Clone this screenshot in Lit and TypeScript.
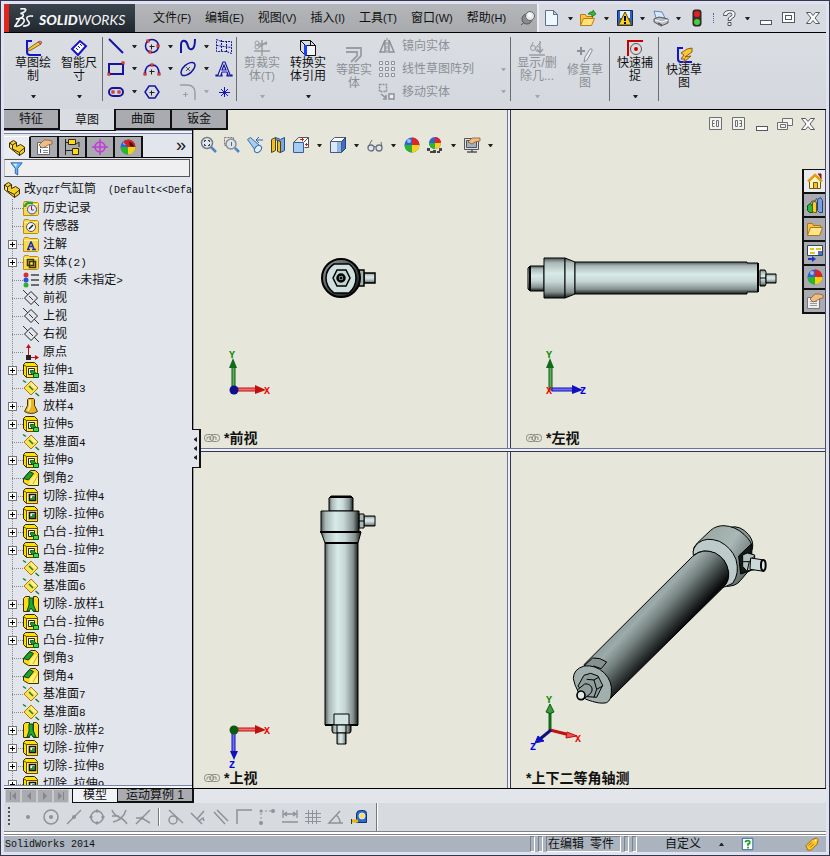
import { LitElement, html, svg, css, nothing } from "lit";
import type { TemplateResult, SVGTemplateResult } from "lit";
import { customElement } from "lit/decorators.js";
import { classMap } from "lit/directives/class-map.js";

/* ---------- icons: every glyph lives on a 16 x 16 grid ---------- */

const sketchL = svg`<path d="M2 1v11q0 3 3 3h11" fill="none" stroke="#1414c8" stroke-width="2"/><path d="M1 1h6" stroke="#1414c8" stroke-width="2"/>`;
const bluePlus = (x: number, y: number) => svg`<path d="M${x - 2} ${y}h5M${x} ${y - 2}v5" transform="translate(-.5 .5)" stroke="#222" stroke-width="1" fill="none"/>`;
const redDot = (x: number, y: number) => svg`<rect x="${x - 1}" y="${y - 1}" width="2" height="2" fill="#fff" stroke="#c00000" stroke-width="1"/>`;
const folder = (inner: SVGTemplateResult) => svg`<path d="M.5 3.500l1-2h4l1 1h8l1 1v11l-1 1H.5z" fill="#fbd94a" stroke="#b8900c"/><path d="M1 4.500h14" stroke="#fff3a8"/>${inner}`;
const box3d = svg`<path d="M.5 2.500l2-2h9l3 3v11l-1 1h-10l-3-3z" fill="#ffe000" stroke="#2c2400"/><path d="M3.500 4.500h11v11h-11z" fill="#ffe21c" stroke="#5c4a00"/><path d="M1 3l2.500 1.500" stroke="#5c4a00"/><path d="M4.500 14.500v-9h9" fill="none" stroke="#fff59a"/>`;
const ball = svg`<circle cx="8" cy="8" r="7.500" fill="#2d62d8"/><path d="M8 8V.5A7.500 7.500 0 0 1 15.500 8z" fill="#e02424"/><path d="M8 8h7.500A7.500 7.500 0 0 1 8 15.500z" fill="#f5d21a"/><path d="M8 8v7.500A7.500 7.500 0 0 1 .5 8z" fill="#2bb52b"/><circle cx="5" cy="4" r="2" fill="#fff" opacity=".55"/>`;
const hand = svg`<path d="M3 6l5-5h4l4 1v3l-4 1-3 2-3 1z" fill="#eebd86" stroke="#8b5a2b" stroke-width=".8"/>`;

const ICONS: Record<string, SVGTemplateResult> = {
  pin: svg`<path d="M1 15l5-4" stroke="#555"/><circle cx="7" cy="9" r="5" fill="#8a8c93" stroke="#555"/><circle cx="10" cy="6" r="4.500" fill="#e4e6ea" stroke="#666"/><circle cx="10" cy="5" r="2" fill="#fff"/>`,
  newdoc: svg`<path d="M1.500.5h8l4 4v11h-12z" fill="#eef6ff" stroke="#5c7390"/><path d="M9.500.5v4h4z" fill="#bcd0e4" stroke="#5c7390"/>`,
  open: svg`<path d="M.5 15.500v-11h5l1 2h6v3" fill="#f7c544" stroke="#c07a10"/><path d="M.5 15.500l3-7h11l-3 7z" fill="#ffe27a" stroke="#c07a10"/><path d="M8 4q2-3 5-2V0l3 4-4 3V5q-2-1-4-1z" fill="#35b635" stroke="#146c14" stroke-width=".7"/>`,
  warn: svg`<path d="M.5.5h15v15H.5z" fill="#2c62c8" stroke="#102a5c"/><path d="M3 1h10v7H3z" fill="#e9f1ff"/><path d="M8 2l6.500 13h-13z" fill="#ffd21c" stroke="#5c4300"/><path d="M8 6v5M8 12v2" stroke="#000" stroke-width="2"/>`,
  print: svg`<path d="M3 8L1 1l8 1 3 6z" fill="#d6e9ff" stroke="#6b86a8"/><path d="M1 9l5-2 9 2v4l-7 3-7-4z" fill="#b8bbc2" stroke="#55585f"/><path d="M2 10l7 2 6-2" stroke="#fff" fill="none"/><path d="M5 13l4 2" stroke="#333"/>`,
  traffic: svg`<rect x="4" y="0" width="8" height="16" rx="2" fill="#4a2a2a" stroke="#222"/><circle cx="8" cy="4" r="3" fill="#e02222"/><circle cx="8" cy="12" r="3" fill="#3fd23f"/>`,
  help: svg`<path d="M2.500 5.500q0-5 6-5t5.500 4q0 3-3 4-1 0-1 2h-3q0-3 2-4 2 0 2-2t-2.500-1.500-2.500 2.500zM7 12.500h3v3H7z" fill="#f7f8fa" stroke="#53555c" stroke-linejoin="round"/>`,
  min: svg`<rect x="2.500" y="10.500" width="11" height="4" fill="#fff" stroke="#55575e"/>`,
  max: svg`<rect x="1.500" y="2.500" width="12" height="10" fill="#fff" stroke="#55575e"/><rect x="4.500" y="5.500" width="6" height="4" fill="#fff" stroke="#55575e"/>`,
  close: svg`<path d="M1.500 2.500h4l2.500 3 2.500-3h4l-4.500 5.500 4.500 5.500h-4L8 10.500l-2.500 3h-4L6 8z" fill="#fff" stroke="#55575e"/>`,
  restore: svg`<path d="M5.500 2.500h10v7h-10z" fill="#f4f4ee" stroke="#6d6f74"/><path d="M.5 6.500h10v7H.5z" fill="#f4f4ee" stroke="#6d6f74"/><path d="M3.500 8.500h5v3h-5z" fill="none" stroke="#6d6f74"/>`,
  paneL: svg`<path d="M1.500 1.500h12v12h-12z" fill="#f4f4ee" stroke="#6d6f74"/><path d="M6.500 4.500h-2v6h2M8.500 4.500h2v6h-2zM4.500 7.500h2" fill="none" stroke="#6d6f74"/>`,
  paneR: svg`<path d="M1.500 1.500h12v12h-12z" fill="#f4f4ee" stroke="#6d6f74"/><path d="M8.500 4.500h2v6h-2M4.500 4.500h2v6h-2zM8.500 7.500h2" fill="none" stroke="#6d6f74"/>`,

  sketch: svg`${sketchL}<path d="M3 9l10-7 3 2-10 6-3 1z" fill="#ffc52e" stroke="#6b4a10" stroke-width=".8"/><path d="M13 2l3 2 1-2-2-1z" fill="#e88a8a" stroke="#803030" stroke-width=".6"/>`,
  dim: svg`<path d="M1 9l8-8 6 5-8 9z" fill="#fff" stroke="#1414c8" stroke-width="2"/><path d="M5 8l2 2M7 6l2 2M9 4l2 2" stroke="#1414c8"/>`,
  line: svg`<path d="M1 1l14 14" stroke="#1414a0" stroke-width="2"/>`,
  rect: svg`<rect x="1" y="3" width="14" height="10" fill="none" stroke="#1414a0" stroke-width="2"/>${redDot(15, 2)}${redDot(1, 13)}`,
  slot: svg`<rect x="1" y="4" width="14" height="8" rx="4" fill="none" stroke="#1414a0" stroke-width="2"/>${redDot(5, 8)}${redDot(11, 8)}`,
  circle: svg`<circle cx="8" cy="8" r="6.500" fill="none" stroke="#1414a0" stroke-width="1.500"/>${bluePlus(8, 8)}${redDot(4, 3)}${redDot(14, 8)}${redDot(6, 14)}`,
  arc: svg`<path d="M1 13q0-9 7-9t7 9" fill="none" stroke="#1414a0" stroke-width="1.500"/>${bluePlus(8, 10)}${redDot(1, 13)}${redDot(15, 13)}${redDot(8, 4)}`,
  hex: svg`<path d="M5 2h6l4 6-4 6H5L1 8z" fill="none" stroke="#1414a0" stroke-width="1.500"/>${bluePlus(8, 8)}`,
  spline: svg`<path d="M1 15V7q0-5 4-4 2 1 3 5t4 3q3-1 3-10" fill="none" stroke="#1414a0" stroke-width="2"/>`,
  ellipse: svg`<ellipse cx="8" cy="8" rx="8.500" ry="4.500" transform="rotate(-42 8 8)" fill="none" stroke="#1414a0" stroke-width="1.500"/><path d="M6 6l4 4M10 6l-4 4" stroke="#333" stroke-width=".8"/>`,
  fillet: svg`<path d="M0 1h7q8 0 8 8v7" fill="none" stroke="#9a9da3" stroke-width="1.500"/><path d="M3 10.500h5M5.500 8v5" stroke="#9a9da3"/>`,
  plane: svg`<path d="M.5 1.500l5 2h10v12l-5-2H.5zM.5 7.500l15 2M5.500 2v12M10.500 3v11" fill="none" stroke="#1414a0" stroke-dasharray="2 1"/>`,
  text: svg`<path d="M7 1h2l5 13h2v1h-5v-1h1l-1-3H6l-1 3h1v1H0v-1h2zM8 4l-2 5h4z" fill="#e9edf8" stroke="#1414a0" stroke-width="1.200"/>`,
  point: svg`<path d="M8.500 3v10M3 8.500h11M5 5l7 7M12 5l-7 7" stroke="#1414c8"/>`,
  trim: svg`<path d="M8 0v16M0 11h16M4 4h9M5 7l8-5" stroke="#9a9da3" stroke-width="1.500"/><circle cx="3" cy="3" r="2" fill="none" stroke="#9a9da3"/><circle cx="3" cy="7" r="2" fill="none" stroke="#9a9da3"/>`,
  convert: svg`<path d="M.5.5h10l5 5v10h-10l-5-5zM.5.5l5 5M10.500.5v5" fill="none" stroke="#111"/><path d="M5.500 5.500h10v10h-10z" fill="#f4f5f8" stroke="#111"/><path d="M5.500 5v10.500" stroke="#1440ff" stroke-width="3"/>`,
  offset: svg`<path d="M0 1h15v8l-6 6M0 5h11v4l-6 6" fill="none" stroke="#9a9da3" stroke-width="1.800"/>`,
  mirror: svg`<path d="M6 2L1 14h5zM10 2l5 12h-5z" fill="none" stroke="#8d9096" stroke-width="1.500"/><path d="M8 0v16" stroke="#8d9096" stroke-dasharray="3 1"/>`,
  pattern: svg`<path d="M1 1h3v3H1zM7 1h3v3H7zM13 1h3v3h-3zM1 7h3v3H1zM7 7h3v3H7zM13 7h3v3h-3zM1 13h3v3H1zM7 13h3v3H7zM13 13h3v3h-3z" transform="translate(-.5 -.5)" fill="#eee" stroke="#8d9096"/>`,
  move: svg`<rect x=".5" y=".5" width="7" height="7" fill="none" stroke="#8d9096" stroke-width="1.500" stroke-dasharray="2 1"/><rect x="10" y="10" width="5" height="5" fill="#eee" stroke="#8d9096" stroke-width="1.500"/><path d="M2 10l5 4M7 11v4H4" stroke="#8d9096" fill="none" stroke-width="1.500"/>`,
  relations: svg`<path d="M0 15h16M11 1v11M8 9l3 4 3-4" stroke="#9a9da3" stroke-width="1.300" fill="none"/><circle cx="4" cy="8" r="2.500" fill="none" stroke="#9a9da3"/><circle cx="9" cy="9" r="2.500" fill="none" stroke="#9a9da3"/><path d="M2 7l2-5M8 6l4-4" stroke="#9a9da3"/>`,
  repair: svg`<path d="M0 4h8M4 0v8" stroke="#8d9096" stroke-width="2"/><path d="M7 15l1-5 5-8q3-1 2 2l-5 9z" fill="#eceef1" stroke="#8d9096"/>`,
  snap: svg`<path d="M0 1h16M1 1v15" stroke="#c80000" stroke-width="2"/><circle cx="9" cy="9" r="5.500" fill="none" stroke="#555"/><circle cx="9" cy="9" r="2" fill="#d00000"/>`,
  rapid: svg`${sketchL}<path d="M5 6l6-4 5-1v4l-7 5 6-1-8 7 2-4H5l3-4z" fill="#ffc52e" stroke="#80500c" stroke-width=".9"/>`,

  part: svg`<path d="M.5 3l4-2.500 3 2v4l4-2 4 2.500v5l-5 3.500-10-8z" fill="#f7cf2a" stroke="#352a00"/><path d="M.5 3l3 2 4-2.500M3.500 5v4l7 3.500v3M10.500 12l5-4" fill="none" stroke="#352a00"/><path d="M1.500 4.500l1.500 1v3l-1.500-1z" fill="#fff29a"/>`,
  props: svg`<path d="M1.500 3.500h12v12h-12z" fill="#fff" stroke="#666"/><path d="M4 8h1M4 11h1M4 13h1" stroke="#2255cc" stroke-width="2"/><path d="M7 8.500h5M7 11.500h5M7 13.500h5" stroke="#888"/>${hand}`,
  config: svg`<path d="M1.500 0v16M2 3.500h4M2 11.500h6" stroke="#222" fill="none"/><path d="M4.500.5h7v5h-7z" fill="#ffd91c" stroke="#332b00"/><path d="M8.500 9.500h6v6h-6z" fill="#ffd91c" stroke="#332b00"/><path d="M12 5l3-2v5" stroke="#332b00" fill="none"/>`,
  dimx: svg`<circle cx="8" cy="8" r="5" fill="none" stroke="#c23bd8" stroke-width="1.500"/><path d="M8 0v16M0 8h16" stroke="#c23bd8" stroke-width="1.500"/>`,
  display: svg`${ball}<path d="M8 8L3 3q5-4 9-1 3 2 3 6z" fill="#d42020"/><path d="M9 3q4 0 5 5l-4-1z" fill="#401010"/>`,
  filter: svg`<path d="M1 1h14L9.500 8v8l-3-2V8z" fill="#68b8f0" stroke="#1853a8"/><path d="M4 2h5L7 6z" fill="#d8f0ff"/>`,
  history: folder(svg`<circle cx="9" cy="9.500" r="4.500" fill="#dfeaff" stroke="#2a4fb0"/><path d="M8.500 6v4h2.500" stroke="#c01818" fill="none"/><path d="M2 7q0-5 8-4" stroke="#2aa02a" stroke-width="2.500" fill="none"/>`),
  sensor: folder(svg`<circle cx="8" cy="9" r="4.500" fill="#f2f5ff" stroke="#555"/><path d="M6 11l4-4" stroke="#111" stroke-width="1.500"/>`),
  note: folder(svg`<path d="M8 5.500L5 13M8 5.500l3 7.500M6 10.500h4M4 13.500h3M9 13.500h4" stroke="#1530c0" stroke-width="1.500"/>`),
  solid: folder(svg`<path d="M4.500 5.500h6v6h-6zM6.500 7.500h6v6h-6z" fill="#ffe94a" stroke="#3a3000" stroke-width="1.500"/>`),
  material: svg`<circle cx="3" cy="3" r="2.500" fill="#d83030"/><circle cx="3" cy="8" r="2.500" fill="#2c50d8"/><circle cx="3" cy="13" r="2.500" fill="#2eb02e"/><path d="M8 3h8M8 8h8M8 13h8" stroke="#444" stroke-width="1.500"/>`,
  refplane: svg`<path d="M8 1.500l6.500 6.500L8 14.500 1.500 8z" fill="none" stroke="#222"/><path d="M0 0l5 5M6 6l4 4M11 11l5 5" stroke="#333"/>`,
  origin: svg`<path d="M5.500 13V2M5 13.500h9" stroke="#c01010" fill="none"/><path d="M5.500 0L3 4h5zM16 13.500l-4-2.500v5z" fill="#c01010"/><rect x="3" y="11" width="5" height="5" fill="#222"/>`,
  extrude: svg`${box3d}<path d="M5.500 6.500h6v6h-6z" fill="#fffbd0" stroke="#2c2400"/><path d="M7.500 8.500h3l2 2v3h-2l-3-3z" fill="#1f9a2c" stroke="#063"/><path d="M10.500 11.500h5v4h-5z" fill="#43d653" stroke="#0a5516"/>`,
  plane3: svg`<path d="M8 1l7 7-7 7-7-7z" fill="#ffe253" stroke="#a67c00"/><path d="M8 2l6 6-3 0-3-3z" fill="#fff3a8"/><path d="M0 .5l3 2M6 6l4 4M12.500 13l3.500 3" stroke="#128020" stroke-width="1.500"/>`,
  loft: svg`<path d="M4.500 1.500l1-1h5l1 1v6l3 6q-6 4-13 0l3-6z" fill="#e8b422" stroke="#4a3600"/><path d="M6 2h2v6l-2 5H4l2-5z" fill="#fff0a0"/>`,
  chamfer: svg`<path d="M.5 8.500l7-8h5l3 3v12h-10l-5-3z" fill="#ffd91c" stroke="#3a3000"/><path d="M.5 8.500l6-7 4 2-5 6.500z" fill="#1fa12e" stroke="#053d0c"/><path d="M6.500 10.500L12 5h3v10H6.500z" fill="#fff07a"/><path d="M10 14l5-9" stroke="#e0a800"/>`,
  cut: svg`${box3d}<path d="M6.500 6.500h6v6h-6z" fill="#f4fff0" stroke="#111" stroke-width="1.500"/><path d="M7.500 11.500h4v-3h-2v2h-2z" fill="#17a028" stroke="#0a5516" stroke-width=".6"/>`,
  cutloft: svg`<path d="M.5 2.500l2-2h4v15h-6zM10.500.5h3l2 2v13h-5z" fill="#ffd91c" stroke="#3a3000"/><path d="M6 2h4v6l3 7h-3l-2-3-2 3H4l2-6z" fill="#1fa736" stroke="#064d10"/>`,

  zoomfit: svg`<circle cx="6" cy="6" r="5.500" fill="#e2e9ee" stroke="#777b85" stroke-width="1.500"/><path d="M3.500 5V3.500H5M7 3.500h1.500V5M8.500 7v1.500H7M5 8.500H3.500V7" fill="none" stroke="#333"/><path d="M10 10l5 5" stroke="#4f86c6" stroke-width="2.500"/>`,
  zoomarea: svg`<rect x=".5" y=".5" width="9" height="8" fill="none" stroke="#777" stroke-dasharray="2 1"/><circle cx="7" cy="7" r="5" fill="#d9e3ec" stroke="#888b92" stroke-width="1.500"/><path d="M7.500 5v4" stroke="#666"/><path d="M11 11l4 4" stroke="#4f86c6" stroke-width="2.500"/>`,
  prev: svg`<path d="M.5 2.500l3-2 9 8-4 5z" fill="#a9cdf0" stroke="#3a6ca8"/><ellipse cx="11" cy="12" rx="4" ry="3" transform="rotate(-45 11 12)" fill="#e2effb" stroke="#3a6ca8"/><path d="M16 3h-6M12 0L9 3l3 3" stroke="#2c66b8" fill="none"/>`,
  section: svg`<path d="M1.500 2.500l4-2v13l-4 2z" fill="#f0c020" stroke="#50400a"/><path d="M5.500.5l5 2 4-2v13l-4 2v-11l-5-2z" fill="#78a8e8" stroke="#24508c"/><path d="M7.500 3.500l3 1v11l-3-1z" fill="#f0c020" stroke="#50400a"/>`,
  orient: svg`<path d="M5.500.5h10v10h-4M.5 5.500l5-5M10.500 5.500l5-5" fill="#fff" stroke="#555"/><path d="M7 2.500h4M9.500.5v4M12 7.500h3M13.500 6v3" stroke="#d02020"/><path d="M.5 5.500h10v10H.5z" fill="#a8cbf2" stroke="#335f9c"/>`,
  cube: svg`<path d="M.5 4.500l4-4h11v11l-4 4H.5z" fill="#fff" stroke="#4a5a78"/><path d="M11.500 4.500l4-4v11l-4 4z" fill="#3e6fc0" stroke="#24437c"/><path d="M.5 4.500h11v11H.5z" fill="#d9e7f8" stroke="#4a5a78"/><path d="M7 5h4v10H7z" fill="#8fb6ea"/>`,
  glasses: svg`<circle cx="4" cy="11" r="3" fill="#dbe8f2" stroke="#6b727c" stroke-width="1.300"/><circle cx="12" cy="11" r="3" fill="#dbe8f2" stroke="#6b727c" stroke-width="1.300"/><path d="M7 10q1-1 2 0M1 10l4-7M15 10l-1-5" fill="none" stroke="#6b727c"/>`,
  ball,
  scene: svg`<path d="M0 11h3v3H0zM6 13h3v3H6zM12 11h3v3h-3zM3 14h3v2H3zM10 14h3v2h-3z" fill="#444"/><circle cx="8" cy="6" r="6" fill="#2d62d8"/><path d="M8 6V0a6 6 0 0 1 6 6z" fill="#e02424"/><path d="M8 6h6a6 6 0 0 1-6 6z" fill="#f5d21a"/><path d="M8 6v6a6 6 0 0 1-6-6z" fill="#2bb52b"/>`,
  monitor: svg`<path d="M.5 1.500h14v11H.5z" fill="#dcdee2" stroke="#555"/><path d="M2.500 3.500h10v7h-10z" fill="#9fb0c4" stroke="#555"/><path d="M3 15h10M8 12v3" stroke="#555" stroke-width="1.500"/><path d="M4 5l4-4h8v3l-5 1-3 2z" fill="#eebd86" stroke="#8b5a2b" stroke-width=".8"/>`,
  home: svg`<path d="M11 1h3v5" fill="#c02020" stroke="#701010"/><path d="M2.500 8v7.500h11V8L8 2.500z" fill="#fff6c8" stroke="#7a5600"/><path d="M1 8.500L8 2l7 6.500" fill="none" stroke="#e0a010" stroke-width="2.500"/><path d="M6.500 9.500h4v6h-4z" fill="#f5c322" stroke="#7a5600"/>`,
  library: svg`<path d="M.5 8.500l3-2 2 3v6h-3l-2-2z" fill="#2db53c" stroke="#0a5516"/><path d="M5.500 5.500l2-1 2 1v10h-2l-2-1z" fill="#f7cf2a" stroke="#6b5200"/><path d="M10.500 2.500l3-2 2 3v12h-3l-2-2z" fill="#7a9fe4" stroke="#24437c"/><path d="M3 7l2-3h3l2-3" fill="none" stroke="#555"/>`,
  folder: svg`<path d="M.5 14.500v-12h5l1 2h7v4" fill="#f7c544" stroke="#b07410"/><path d="M.5 14.500l3-8h12l-3 8z" fill="#ffe68a" stroke="#b07410"/>`,
  palette: svg`<path d="M.5.5h15v10H.5z" fill="#fff" stroke="#345"/><path d="M3 4h4M9 4h5M3 8h5" stroke="#e8c410" stroke-width="2"/><path d="M11 6h4v4h-4z" fill="#4a72c0"/><path d="M1 13h4v-2l4 3-4 3v-2H1z" fill="#1838c8"/>`,
  cprops: svg`<path d="M.5 4.500h12v11H.5z" fill="#eee" stroke="#777"/><path d="M3 8.500h7M3 10.500h7M3 12.500h7" stroke="#999"/>${hand}`,

  kdot: svg`<circle cx="8" cy="8" r="2" fill="#8f9298"/>`,
  kcirc: svg`<circle cx="8" cy="8" r="7" fill="none" stroke="#8f9298" stroke-width="1.500"/><circle cx="8" cy="8" r="2" fill="#8f9298"/>`,
  kline: svg`<path d="M1 15L15 1" stroke="#8f9298" stroke-width="1.500"/><circle cx="8" cy="8" r="2" fill="#8f9298"/>`,
  kquad: svg`<circle cx="8" cy="8" r="6" fill="none" stroke="#8f9298" stroke-width="1.500"/><path d="M8 0l2 2-2 2-2-2zM8 12l2 2-2 2-2-2zM2 6l2 2-2 2-2-2zM14 6l2 2-2 2-2-2z" fill="#8f9298"/>`,
  kx: svg`<path d="M0 1q2 5 7 7t8 7M1 13q10-2 13-12M0 7h7" fill="none" stroke="#8f9298" stroke-width="1.500"/>`,
  knear: svg`<path d="M1 15L15 1M1 9h6l8 5" fill="none" stroke="#8f9298" stroke-width="1.500"/><circle cx="7" cy="9" r="1.500" fill="#8f9298"/>`,
  ktan: svg`<circle cx="6" cy="11" r="4" fill="none" stroke="#8f9298" stroke-width="1.500"/><path d="M2 1l14 13" stroke="#8f9298" stroke-width="1.500"/>`,
  kperp: svg`<path d="M1 4l11 11M7 10l7-8M9 12l4-3 1 3" fill="none" stroke="#8f9298" stroke-width="1.500"/>`,
  kpar: svg`<path d="M1 3l11 12M4 1l11 11" stroke="#8f9298" stroke-width="1.500"/>`,
  kcorner: svg`<path d="M1 15V1h15" fill="none" stroke="#8f9298" stroke-width="1.500"/>`,
  kpts: svg`<path d="M2 14V2h12" fill="none" stroke="#8f9298" stroke-dasharray="2 2"/><circle cx="2" cy="2" r="1.500" fill="#8f9298"/><circle cx="14" cy="2" r="2" fill="#8f9298"/><circle cx="2" cy="14" r="2" fill="#8f9298"/>`,
  klen: svg`<path d="M0 13h16M1 1v8M15 1v8M2 5h12M5 3L2 5l3 2M11 3l3 2-3 2" fill="none" stroke="#8f9298" stroke-width="1.300"/>`,
  kgrid: svg`<path d="M3.500 1v14M7.500 1v14M11.500 1v14M0 4.500h16M0 8.500h16M0 12.500h16" stroke="#8f9298"/>`,
  kang: svg`<path d="M15 14H1L12 2M8 6q4 3 4 8" fill="none" stroke="#8f9298" stroke-width="1.500"/>`,
  tape: svg`<path d="M5.500 13.500V5q0-3.500 4-3.500h3q3 0 3 3v9z" fill="#2f68d0" stroke="#10306c"/><circle cx="11" cy="7" r="3" fill="#ffe14a" stroke="#d8e8ff"/><path d="M0 12h7" stroke="#e8b800" stroke-width="3"/><path d="M.5 10v5" stroke="#333"/>`,
  qhelp: svg`<path d="M1.500 1.500h12v13h-12z" fill="#fff" stroke="#1c5a9c"/><path d="M5 6q0-2 2.500-2T10 6q0 2-2 2v2M8 11v2" fill="none" stroke="#18a028" stroke-width="2"/>`,
  tag: svg`<path d="M1 10l7-7 5-2 2 2-1 5-7 7H3z" fill="#ffc52e" stroke="#9a6400"/><path d="M4 10l4-4M6 12l4-4" stroke="#9a6400"/><circle cx="12" cy="4" r="1" fill="#fff"/>`,
  link: svg`<rect x=".5" y="4.500" width="9" height="7" rx="3" fill="none" stroke="#8a8a7c"/><rect x="6.500" y="4.500" width="9" height="7" rx="3" fill="none" stroke="#8a8a7c"/><path d="M3 9.500V8q0-1 1-1h2v3M9 9.500V7h3v3" fill="none" stroke="#8a8a7c"/>`,
};

const icon = (name: string) => html`<svg class="ic" viewBox="0 0 16 16" aria-hidden="true">${ICONS[name]}</svg>`;
const arrow = (off = false) => html`<svg class="arrow ${off ? "off" : ""}" viewBox="0 0 5 3" aria-hidden="true"><path d="M0 0h5L3 3H2z"></path></svg>`;

/* Half-width characters take half of a full-width one. */
const mixed = (text: string) =>
  text.split(/([\x20-\x7e]+)/).map((part) => (/^[\x20-\x7e]+$/.test(part) ? html`<span class="half">${part}</span>` : part));

/* ---------- data ---------- */

const MENUS = [["文件", "F"], ["编辑", "E"], ["视图", "V"], ["插入", "I"], ["工具", "T"], ["窗口", "W"], ["帮助", "H"]];

const TREE: Array<[string, string, boolean]> = [
  ["history", "历史记录", false], ["sensor", "传感器", false], ["note", "注解", true], ["solid", "实体(2)", true],
  ["material", "材质 <未指定>", false], ["refplane", "前视", false], ["refplane", "上视", false], ["refplane", "右视", false],
  ["origin", "原点", false], ["extrude", "拉伸1", true], ["plane3", "基准面3", false], ["loft", "放样4", true],
  ["extrude", "拉伸5", true], ["plane3", "基准面4", false], ["extrude", "拉伸9", true], ["chamfer", "倒角2", false],
  ["cut", "切除-拉伸4", true], ["cut", "切除-拉伸6", true], ["extrude", "凸台-拉伸1", true], ["extrude", "凸台-拉伸2", true],
  ["plane3", "基准面5", false], ["plane3", "基准面6", false], ["cutloft", "切除-放样1", true], ["extrude", "凸台-拉伸6", true],
  ["extrude", "凸台-拉伸7", true], ["chamfer", "倒角3", false], ["chamfer", "倒角4", false], ["plane3", "基准面7", false],
  ["plane3", "基准面8", false], ["cutloft", "切除-放样2", true], ["cut", "切除-拉伸7", true], ["cut", "切除-拉伸8", true],
  ["cut", "切除-拉伸9", true],
];

const base = css`
  * { box-sizing: border-box; }
  button { font: inherit; color: inherit; background: none; border: 0; padding: 0; margin: 0; display: flex; align-items: center; justify-content: center; flex: none; }
  .ic { width: 16px; height: 16px; display: block; flex: none; overflow: visible; }
  .arrow { width: 5px; height: 3px; fill: #222; flex: none; display: block; }
  .arrow.off { fill: #a4a7ad; }
  .half { font-family: "Liberation Mono", monospace; font-size: 10px; white-space: pre; }
`;

/* ---------- title bar ---------- */

@customElement("sw-titlebar")
class Titlebar extends LitElement {
  static styles = [base, css`
    :host { display: flex; height: 29px; border-bottom: 1px solid #000; background: #d7dae0; }
    .logo { width: 131px; flex: none; display: flex; align-items: center; border-left: 5px solid #e0261c; background: linear-gradient(#3c454e, #20272e); color: #f4f5f7; }
    .ds { width: 20px; height: 20px; margin: 0 5px 0 5px; flex: none; }
    .brand { font: italic 400 14px/24px Lato, sans-serif; padding-top: 4px; }
    .brand b { font-weight: 900; }
    .menus { flex: none; width: 404px; display: flex; align-items: center; gap: 14px; padding-left: 18px; background: linear-gradient(#b4b6ba, #a8aaae); border-right: 2px solid #eceef2; white-space: nowrap; line-height: 20px; }
    .key { font-size: 11px; }
    .tools { flex: 1; display: flex; align-items: center; justify-content: space-between; padding: 0 5px; }
    .dots { width: 1px; height: 10px; border-left: 1px dotted #3a6ea5; }
  `];
  render() {
    return html`
      <div class="logo">
        <svg class="ds" viewBox="0 0 22 22" aria-hidden="true" fill="none" stroke="#f4f5f7" stroke-width="1.8">
          <path d="M7 1q5-1 6 1-1 3-6 4 4 0 3 3-2 3-8 3M7 11l-6 9q7 1 10-5 1-4-4-4M21 9q-6-1-7 2 0 2 2 4t-1 4q-2 1-5 1"></path>
        </svg>
        <span class="brand"><b>SOLID</b>WORKS</span>
      </div>
      <nav class="menus">
        ${MENUS.map(([t, k]) => html`<button>${t}<span class="key">(${k})</span></button>`)}
        <button aria-label="固定">${icon("pin")}</button>
      </nav>
      <div class="tools">
        ${["newdoc", "open", "warn", "print"].map((n) => html`<button aria-label=${n}>${icon(n)}</button>${arrow()}`)}
        <button aria-label="traffic">${icon("traffic")}</button><span class="dots"></span>
        <button aria-label="help">${icon("help")}</button>${arrow()}
        ${["min", "max", "close"].map((n) => html`<button aria-label=${n}>${icon(n)}</button>`)}
      </div>`;
  }
}

/* ---------- command ribbon ---------- */

interface Big { icon: string; lines: string[]; off?: boolean; drop?: boolean; wide?: boolean }

@customElement("sw-ribbon")
class Ribbon extends LitElement {
  static styles = [base, css`
    :host { display: flex; height: 77px; padding: 2px 0 6px 6px; border-bottom: 1px solid #000; background: linear-gradient(#dadde2, #d4d8de); }
    .big { width: 46px; flex-direction: column; justify-content: flex-start; align-self: stretch; padding-top: 5px; gap: 1px; line-height: 13px; text-align: center; }
    .big.wide { width: 48px; }
    .big.low { padding-top: 12px; }
    .big .arrow { margin-top: 11px; }
    .cap { white-space: nowrap; }
    .off { color: #8c8f95; }
    .key { font-size: 11px; }
    .sep { width: 1px; background: #6a6d74; margin: 2px 2px 2px 0; flex: none; }
    .grid { display: grid; grid-template-columns: repeat(3, 20px 16px) 20px; grid-auto-rows: 1fr; place-items: center; padding: 0 2px 0 1px; flex: none; height: 100%; }
    .list { width: 133px; flex: none; display: flex; flex-direction: column; color: #8c8f95; }
    .row { flex: 1; display: flex; align-items: center; padding: 0 4px 0 2px; gap: 7px; }
    .row button { gap: 7px; flex: 1; justify-content: flex-start; }
  `];
  private big(b: Big) {
    const low = !b.drop;
    return html`<button class=${classMap({ big: true, wide: !!b.wide, low, off: !!b.off })}>
      ${icon(b.icon)}<span class="cap">${b.lines[0]}<br />${b.lines[1]}${b.lines[2] ? html`<span class="key">${b.lines[2]}</span>` : nothing}</span>
      ${b.drop ? arrow(b.off) : nothing}</button>`;
  }
  private tool(name: string, drop: "on" | "off" | "none" | "end") {
    return html`<button aria-label=${name}>${icon(name)}</button>${drop === "end" ? nothing : drop === "none" ? html`<span></span>` : arrow(drop === "off")}`;
  }
  private row(name: string, label: string, drop: boolean) {
    return html`<div class="row"><button>${icon(name)}${label}</button>${drop ? arrow(true) : nothing}</div>`;
  }
  render() {
    const sep = html`<span class="sep"></span>`;
    return html`
      ${this.big({ icon: "sketch", lines: ["草图绘", "制"], drop: true })}
      ${this.big({ icon: "dim", lines: ["智能尺", "寸"], drop: true })}
      ${sep}
      <div class="grid">
        ${this.tool("line", "on")}${this.tool("circle", "on")}${this.tool("spline", "on")}${this.tool("plane", "end")}
        ${this.tool("rect", "on")}${this.tool("arc", "on")}${this.tool("ellipse", "on")}${this.tool("text", "end")}
        ${this.tool("slot", "on")}${this.tool("hex", "none")}${this.tool("fillet", "off")}${this.tool("point", "end")}
      </div>
      ${sep}
      ${this.big({ icon: "trim", lines: ["剪裁实", "体", "(T)"], drop: true, off: true })}
      ${this.big({ icon: "convert", lines: ["转换实", "体引用"], drop: true })}
      ${this.big({ icon: "offset", lines: ["等距实", "体"], off: true })}
      <div class="list">
        ${this.row("mirror", "镜向实体", false)}${this.row("pattern", "线性草图阵列", true)}${this.row("move", "移动实体", true)}
      </div>
      ${sep}
      ${this.big({ icon: "relations", lines: ["显示/删", "除几..."], drop: true, off: true, wide: true })}
      ${this.big({ icon: "repair", lines: ["修复草", "图"], off: true, wide: true })}
      ${sep}
      ${this.big({ icon: "snap", lines: ["快速捕", "捉"], drop: true })}
      ${sep}
      ${this.big({ icon: "rapid", lines: ["快速草", "图"] })}`;
  }
}

/* ---------- feature tree ---------- */

@customElement("sw-feature-panel")
class FeaturePanel extends LitElement {
  static styles = [base, css`
    :host { display: flex; flex-direction: column; min-height: 0; overflow: hidden; padding-top: 20px; background: #e2e5ec; border-right: 1px solid #000; }
    .split { height: 4px; flex: none; border: solid #7a83a8; border-width: 1px 0; background: #f4f5fa; margin-bottom: 2px; }
    .tabs { height: 22px; flex: none; display: flex; border-bottom: 1px solid #000; }
    .tab { width: 28px; background: #a9abb0; border-right: 2px solid #111; border-top: 1px solid #111; }
    .tab.on { width: 27px; background: #e9ebf1; border-top-color: #fff; margin-bottom: -1px; }
    .more { margin-left: auto; width: 22px; font-size: 18px; line-height: 18px; padding-bottom: 3px; }
    .search { flex: none; height: 18px; margin: 1px 2px 4px 0; display: flex; align-items: center; gap: 2px; padding-left: 5px; background: #efeff1; border: 1px solid #555; border-left-color: #bbb; }
    .search .ic { width: 13px; height: 13px; }
    .search input { flex: 1; min-width: 0; height: 14px; border: 0; padding: 0; background: none; font: inherit; outline: none; }
    .root { height: 18px; flex: none; display: flex; align-items: center; gap: 4px; white-space: pre; overflow: hidden; }
    ul { list-style: none; margin: 0; padding: 0; flex: 1; min-height: 0; overflow: hidden; }
    ul .half { font-size: 11px; }
    li { height: 18px; display: flex; align-items: center; white-space: nowrap; }
    .gutter { width: 19px; height: 18px; flex: none; display: flex; align-items: center; padding-left: 4px;
      background: repeating-linear-gradient(#888 0 1px, transparent 1px 2px) 8px 0 / 1px 100% no-repeat,
        repeating-linear-gradient(90deg, #888 0 1px, transparent 1px 2px) 8px 9px / 11px 1px no-repeat; }
    .gutter button { width: 9px; height: 9px; border: 1px solid #777; background: linear-gradient(#000, #000) center / 5px 1px no-repeat, linear-gradient(#000, #000) center / 1px 5px no-repeat, #fff; }
    .name { margin-left: 4px; }
    .foot { height: 3px; flex: none; border-top: 1px solid #7a83a8; background: #f4f5fa; }
  `];
  render() {
    return html`
      <div class="split"></div>
      <div class="tabs">
        ${["part", "props", "config", "dimx", "display"].map((n, i) => html`<button class=${classMap({ tab: true, on: i === 0 })} aria-label=${n}>${icon(n)}</button>`)}
        <button class="more" aria-label="more">»</button>
      </div>
      <label class="search">${icon("filter")}<input type="text" aria-label="过滤" /></label>
      <div class="root">${icon("part")}<span>${mixed("改yqzf气缸筒  (Default<<Defa")}</span></div>
      <ul>
        ${TREE.map(([ic, name, open]) => html`<li><span class="gutter">${open ? html`<button aria-label="展开 ${name}"></button>` : nothing}</span>${icon(ic)}<span class="name">${mixed(name)}</span></li>`)}
      </ul>
      <div class="foot"></div>`;
  }
}

/* ---------- model views ---------- */

const shades = (id: string, vertical: boolean) => svg`
  <linearGradient id=${id} x1="0" y1="0" x2=${vertical ? "0" : "1"} y2=${vertical ? "1" : "0"}>
    <stop offset="0" stop-color="#4d5857"/><stop offset=".12" stop-color="#a9b8b6"/><stop offset=".38" stop-color="#d8eae8"/>
    <stop offset=".6" stop-color="#c6d6d4"/><stop offset=".85" stop-color="#84918f"/><stop offset="1" stop-color="#171b1b"/>
  </linearGradient>`;

const frontModel = svg`
  <defs>${shades("down", true)}${shades("across", false)}<linearGradient id="ring" x1="0" y1="0" x2="1" y2="1"><stop offset="0" stop-color="#93a09f"/><stop offset="1" stop-color="#0c0f0f"/></linearGradient></defs>
  <g stroke="#000">
    <rect x="170" y="163" width="11" height="10" fill="url(#down)" stroke-width="1.500"/>
    <rect x="165" y="160" width="5" height="16" fill="#9fb0ae" stroke-width="1.500"/>
    <circle cx="147" cy="168" r="19" fill="url(#ring)" stroke-width="2"/>
    <path d="M140 154h15q7 5 7 14t-7 15h-15q-8-6-8-15t8-14z" fill="#cfe0de" stroke-width="1.500"/>
    <path d="M143 160h9l4 8-4 8h-9l-4-8z" fill="#c3d4d2" stroke-width="1.500"/>
    <circle cx="147" cy="168" r="3.500" fill="#9aa" stroke-width="2.500"/><circle cx="147" cy="168" r="1"/>
  </g>`;

const leftModel = svg`
  <g stroke="#000" fill="url(#down)">
    <path d="M19 156h14v25H19l-2-2v-21z"/><path d="M19 156v25" stroke-width="2"/>
    <path d="M33 148h21v40H33z"/><path d="M54 148l10 4v32l-10 4z"/>
    <path d="M64 152h172v1h11v29h-11v2H64z"/><path d="M247 153v29" stroke-width="2"/>
    <path d="M249 160h5l1 2v12l-1 2h-5zM249 168h6"/><path d="M255 164h10v9h-10z"/>
  </g>`;

const topModel = svg`
  <g stroke="#000" fill="url(#across)">
    <path d="M135 59V46l2-2h20l2 2v13z"/><path d="M136 45h22" stroke-width="2"/>
    <path d="M170 64h11v10h-11z" fill="url(#down)"/><path d="M165 62h5v14h-5zM165 69h5" fill="#a9b8b6"/>
    <path d="M127 80h40l-3 11h-33z"/><path d="M127 59h38v21h-38z"/><path d="M126 80h41" stroke-width="2"/>
    <path d="M131 91h33v182h-33z"/><path d="M131 91h33M131 273h33" stroke-width="2"/>
    <path d="M140 262h15v11h-15z" fill="#d2e3e1"/><path d="M138 273h19v6l-1 2h-17l-1-2zM143 273v8M152 273v8"/><path d="M143 281h9v11h-9z"/>
  </g>`;

const isoModel = svg`
  <defs>
    <linearGradient id="iso" gradientUnits="userSpaceOnUse" x1="360" y1="510" x2="470" y2="612">
      <stop offset="0" stop-color="#8b9896"/><stop offset=".25" stop-color="#9dabaa"/><stop offset=".5" stop-color="#73807e"/><stop offset=".8" stop-color="#333a39"/><stop offset="1" stop-color="#0a0c0c"/>
    </linearGradient>
    <linearGradient id="head" gradientUnits="userSpaceOnUse" x1="560" y1="300" x2="720" y2="400"><stop offset="0" stop-color="#98a6a4"/><stop offset=".5" stop-color="#a9b7b5"/><stop offset="1" stop-color="#55605f"/></linearGradient>
  </defs>
  <g transform="translate(-1 -12) scale(.3333)" stroke="#000" stroke-width="3" stroke-linejoin="round">
    <path d="M660 262q30-8 56 22 18 22 10 46l-60-40z" fill="#8d9a98"/>
    <path d="M550 335q-2-12 12-26l40-38q16-14 40-14 34 2 60 26t24 40l-2 60-32 38q-14 20-50 18z" fill="url(#head)"/>
    <path d="M550 346q-4-22 16-38 24-18 62-4 36 18 50 54 12 42-10 72l-22 10-8 2q22-20 16-50-6-36-36-50-36-20-68 4z" fill="#bccbc9"/>
    <path d="M686 348l38-36-2 80-30 10z" fill="#16191a"/>
    <path d="M222 674L548 349q30-26 68-10 34 18 40 58 2 26-14 43L302 775z" fill="url(#iso)"/>
    <path d="M222 678l26-24q22-2 42 12l-16 20-24-8" fill="#84918f"/>
    <path d="M222 678q34-4 60 20 26 26 22 60 0 22-14 30-20 6-62-10-30-20-38-62 0-28 32-38z" fill="#a1afad"/>
    <path d="M222 706l20-6 22 8 14 28-18 36-30-2-26-32z" fill="#8f9d9b"/><path d="M230 718l22 2 8 28-8 24M252 720l14-8M260 748l18-10" fill="none"/>
    <path d="M202 750l22-18q16-2 22 12 2 10-4 16l-24 20z" fill="#8f9d9b"/>
    <ellipse cx="213" cy="766" rx="12" ry="13" fill="#dfe9e7" stroke-width="5"/>
    <path d="M698 345l14-6 22 6v44l-24 4-12-14z" fill="#b2c1bf"/><path d="M698 365h20l14-16M718 365l-6 26" fill="none"/>
    <path d="M722 354l40 6v34l-42-6z" fill="#cbdad8"/><ellipse cx="760" cy="376" rx="7" ry="16" fill="#dbe8e6" stroke-width="6"/>
  </g>`;

const axis = (x: number, y: number, t: string, c: string) => svg`<text x=${x} y=${y} fill=${c}>${t}</text>`;
const upY = svg`<rect x="28" y="22" width="3" height="24" fill="#5fae5f" stroke="#0d5a12"/><path d="M29 14l4 10h-8z" fill="#0f6b17"/>${axis(25, 14, "Y", "#008a00")}`;
const right = (c: string, light: string) => svg`<rect x="31" y="44" width="21" height="3" fill=${light} stroke=${c}/><path d="M62 46l-11-5v9z" fill=${c}/>`;

const TRIADS = {
  front: svg`${upY}${right("#c01010", "#f07070")}${axis(60, 50, "X", "#f00000")}<circle cx="30" cy="46" r="4.500" fill="#10108c"/>`,
  left: svg`${upY}${axis(25, 50, "X", "#f00000")}${right("#1010c0", "#7070f0")}${axis(59, 50, "Z", "#0000f0")}`,
  top: svg`<rect x="28" y="46" width="3" height="22" fill="#7070f0" stroke="#1010c0"/><path d="M30 76l-4-9h8z" fill="#1010c0"/>${axis(25, 84, "Z", "#0000f0")}${right("#c01010", "#f07070")}${axis(60, 50, "X", "#f00000")}<circle cx="30" cy="46" r="4.500" fill="#0c5a12"/>`,
  iso: svg`<path d="M29 46V26" stroke="#0f6b17" stroke-width="3"/><path d="M29 20l4 8q-4 3-8 0z" fill="#3a9c3f" stroke="#0d5a12"/>${axis(25, 19, "Y", "#008a00")}
    <path d="M29 46l20 5" stroke="#c01010" stroke-width="3"/><path d="M56 52l-10-4-1 6z" fill="#f05050" stroke="#c01010"/>${axis(54, 58, "X", "#f00000")}
    <path d="M30 46l-11 9" stroke="#101080" stroke-width="3"/><path d="M14 59l3-7 6 5z" fill="#1010c0" stroke="#1010c0"/>${axis(9, 66, "Z", "#0000f0")}`,
};

const HUD: Array<[string, boolean]> = [["zoomfit", false], ["zoomarea", false], ["prev", false], ["section", false], ["orient", true], ["cube", true], ["glasses", true], ["ball", false], ["scene", true], ["monitor", true]];

@customElement("sw-views")
class Views extends LitElement {
  static styles = [base, css`
    :host { display: grid; grid-template-columns: 313fr 4px 314fr; grid-template-rows: 338fr 4px 336fr; min-width: 0; min-height: 0; background: #e6e6da; }
    .view { position: relative; overflow: hidden; min-width: 0; min-height: 0; background: #e6e6da; }
    .model { position: absolute; inset: 0; width: 100%; height: 100%; }
    .corner { position: absolute; left: 10px; bottom: 2px; }
    .triad { display: block; width: 80px; height: 86px; font: 700 10px "Liberation Mono", monospace; }
    .label { display: flex; align-items: center; height: 16px; gap: 4px; font-weight: 700; font-size: 14px; color: #111; }
    .label.plain, .label.inset { padding-left: 5px; }
    .v { border: solid #6d7296; border-width: 0 1px; border-right-color: #33364a; background: #eef0fa; }
    .h { border: solid #6d7296; border-width: 1px 0; border-bottom-color: #33364a; background: #eef0fa; }
    .hud { position: absolute; left: 3px; top: 25px; display: flex; }
    .hud button { width: 23px; height: 20px; }
    .hud button.drop { width: 37px; gap: 8px; justify-content: flex-start; padding-left: 4px; }
    .doc { position: absolute; right: 9px; top: 6px; display: flex; gap: 7px; }
    .pane { position: absolute; right: -1px; top: 59px; width: 24px; border: solid #111; border-width: 1px 0 0 2px; }
    .pane button { width: 100%; height: 24px; background: #a9abb0; border-bottom: 2px solid #111; }
    .pane button.on { background: #e9ebf1; }
  `];
  private view(box: string, model: SVGTemplateResult, triad: SVGTemplateResult, label: string, kind: "" | "inset" | "plain", extra: TemplateResult | typeof nothing) {
    return html`<section class="view">
      <svg class="model" viewBox=${box} aria-hidden="true">${model}</svg>
      <div class="corner"><svg class="triad" viewBox="0 0 80 86">${triad}</svg>
        <div class="label ${kind}">${kind === "plain" ? nothing : icon("link")}<span>${label}</span></div></div>
      ${extra}</section>`;
  }
  render() {
    const hud = html`<div class="hud">${HUD.map(([n, d]) => html`<button class=${d ? "drop" : ""} aria-label=${n}>${icon(n)}${d ? arrow() : nothing}</button>`)}</div>`;
    const ctl = html`
      <div class="doc">${["paneL", "paneR", "min", "restore", "close"].map((n) => html`<button aria-label=${n}>${icon(n)}</button>`)}</div>
      <div class="pane">${["home", "library", "folder", "palette", "ball", "cprops"].map((n, i) => html`<button class=${i ? "" : "on"} aria-label=${n}>${icon(n)}</button>`)}</div>`;
    return html`
      ${this.view("0 0 313 338", frontModel, TRIADS.front, "*前视", "", hud)}<i class="v"></i>
      ${this.view("0 0 314 338", leftModel, TRIADS.left, "*左视", "inset", ctl)}
      <i class="h"></i><i class="h"></i><i class="h"></i>
      ${this.view("0 0 313 336", topModel, TRIADS.top, "*上视", "", nothing)}<i class="v"></i>
      ${this.view("0 0 314 336", isoModel, TRIADS.iso, "*上下二等角轴测", "plain", nothing)}`;
  }
}

/* ---------- sheet tabs, snap toolbar, status bar ---------- */

@customElement("sw-bottom")
class Bottom extends LitElement {
  static styles = [base, css`
    :host { display: block; }
    .sheets { height: 15px; display: flex; background: #e2e5ea; border-top: 1px solid #000; line-height: 13px; }
    .nav { width: 16px; background: #a9abb0; border: 1px solid #c8cace; }
    .nav svg { width: 8px; height: 8px; fill: #85878c; display: block; }
    .first { margin-left: 1px; }
    .sheet { background: #a9abb0; border: solid #111; border-width: 0 2px 2px 0; width: 76px; }
    .sheet.on { background: #f1f3f7; width: 46px; border-width: 0 1px 1px; margin-left: 3px; }
    .snaps { height: 28px; display: flex; align-items: center; background: #d7dade; }
    .snaps button { width: 23px; height: 24px; }
    .grip { width: 2px; height: 20px; margin: 0 6px 0 4px; background: repeating-linear-gradient(#555 0 2px, transparent 2px 4px); }
    .bar { width: 2px; height: 18px; border-left: 1px solid #777; background: #fff; margin: 0 3px 0 4px; }
    .bar.tall { height: 28px; margin-left: 6px; }
    .rule { height: 4px; border: solid #808288; border-width: 1px 0; background: #fff; }
    .status { height: 17px; display: flex; align-items: center; background: #aab3be; line-height: 16px; white-space: pre; padding-right: 6px; border-top: 1px solid #fff; }
    .status .msg { flex: 1; padding-left: 1px; }
    .cell { height: 16px; border: 1px solid #7b828c; border-right-color: #fff; border-bottom-color: #fff; margin-right: 3px; width: 5px; }
    .cell.text { width: 75px; padding-left: 1px; line-height: 14px; }
    .units { margin-left: 25px; gap: 18px; }
    .q { margin: 0 48px 0 16px; }
    .status .ic { height: 14px; }
  `];
  render() {
    const nav = ["M1 0h1v8H1zM7 0v8L3 4z", "M6 0v8L2 4z", "M2 0v8l4-4z", "M6 0h1v8H6zM1 0v8l4-4z"];
    const snap = (n: string) => html`<button aria-label=${n}>${icon(n)}</button>`;
    return html`
      <div class="sheets">
        <span class="first"></span>
        ${nav.map((d, i) => html`<button class="nav" aria-label="sheet ${i}"><svg viewBox="0 0 8 8"><path d=${d}></path></svg></button>`)}
        <button class="sheet on">模型</button><button class="sheet">运动算例 1</button>
      </div>
      <div class="snaps">
        <span class="grip"></span>
        ${["kdot", "kcirc", "kline", "kquad", "kx", "knear"].map(snap)}<span class="bar"></span>
        ${["ktan", "kperp", "kpar", "kcorner", "kpts", "klen", "kgrid", "kang", "tape"].map(snap)}<span class="bar tall"></span>
      </div>
      <div class="rule"></div>
      <div class="status">
        <span class="msg">${mixed("SolidWorks 2014")}</span>
        <span class="cell"></span><span class="cell"></span><span class="cell text">${mixed("在编辑 零件")}</span><span class="cell"></span><span class="cell"></span>
        <button class="units">自定义<svg class="arrow" viewBox="0 0 5 3"><path d="M0 3h5L3 0H2z"></path></svg></button>
        <button class="q" aria-label="help">${icon("qhelp")}</button>
        <button aria-label="tag">${icon("tag")}</button>
      </div>`;
  }
}

@customElement("app-root")
class AppRoot extends LitElement {
  static styles = [base, css`
    :host { display: flex; flex-direction: column; height: 100vh; min-height: 480px; padding: 3px; border: 1px solid #35374d; background: #e0e2f2; box-sizing: border-box; overflow: hidden; color: #111;
      font: 12px/16px "Liberation Sans", "Noto Sans CJK SC", sans-serif; }
    .work { position: relative; flex: 1; min-height: 0; display: grid; grid-template-columns: 189px minmax(0, 1fr); grid-template-rows: minmax(0, 1fr); border-right: 1px solid #4a4d62; }
    .views { border-left: 1px solid #9a9da3; }
    .tabs { position: absolute; left: 0; top: -1px; display: flex; align-items: flex-start; }
    .tab { height: 21px; width: 56px; background: #a9abb0; border: solid #111; border-width: 1px 2px 2px 0; }
    .tab.on { height: 22px; background: #d9dce2; border-width: 0 2px 1px 0; }
    .handle { position: absolute; left: 188px; top: calc(50% - 20px); width: 9px; height: 39px; flex-direction: column; gap: 4px; background: #e2e5ec; border: solid #111; border-width: 1px 2px 1px 0; }
    .handle svg { width: 3px; height: 5px; fill: #222; display: block; }
  `];
  render() {
    return html`
      <sw-titlebar></sw-titlebar>
      <sw-ribbon></sw-ribbon>
      <div class="work">
        <sw-feature-panel></sw-feature-panel>
        <sw-views class="views"></sw-views>
        <nav class="tabs">${["特征", "草图", "曲面", "钣金"].map((t, i) => html`<button class=${classMap({ tab: true, on: i === 1 })}>${t}</button>`)}</nav>
        <button class="handle" aria-label="collapse">${[0, 1, 2].map(() => html`<svg viewBox="0 0 3 5"><path d="M3 0v5L0 3V2z"></path></svg>`)}</button>
      </div>
      <sw-bottom></sw-bottom>`;
  }
}
